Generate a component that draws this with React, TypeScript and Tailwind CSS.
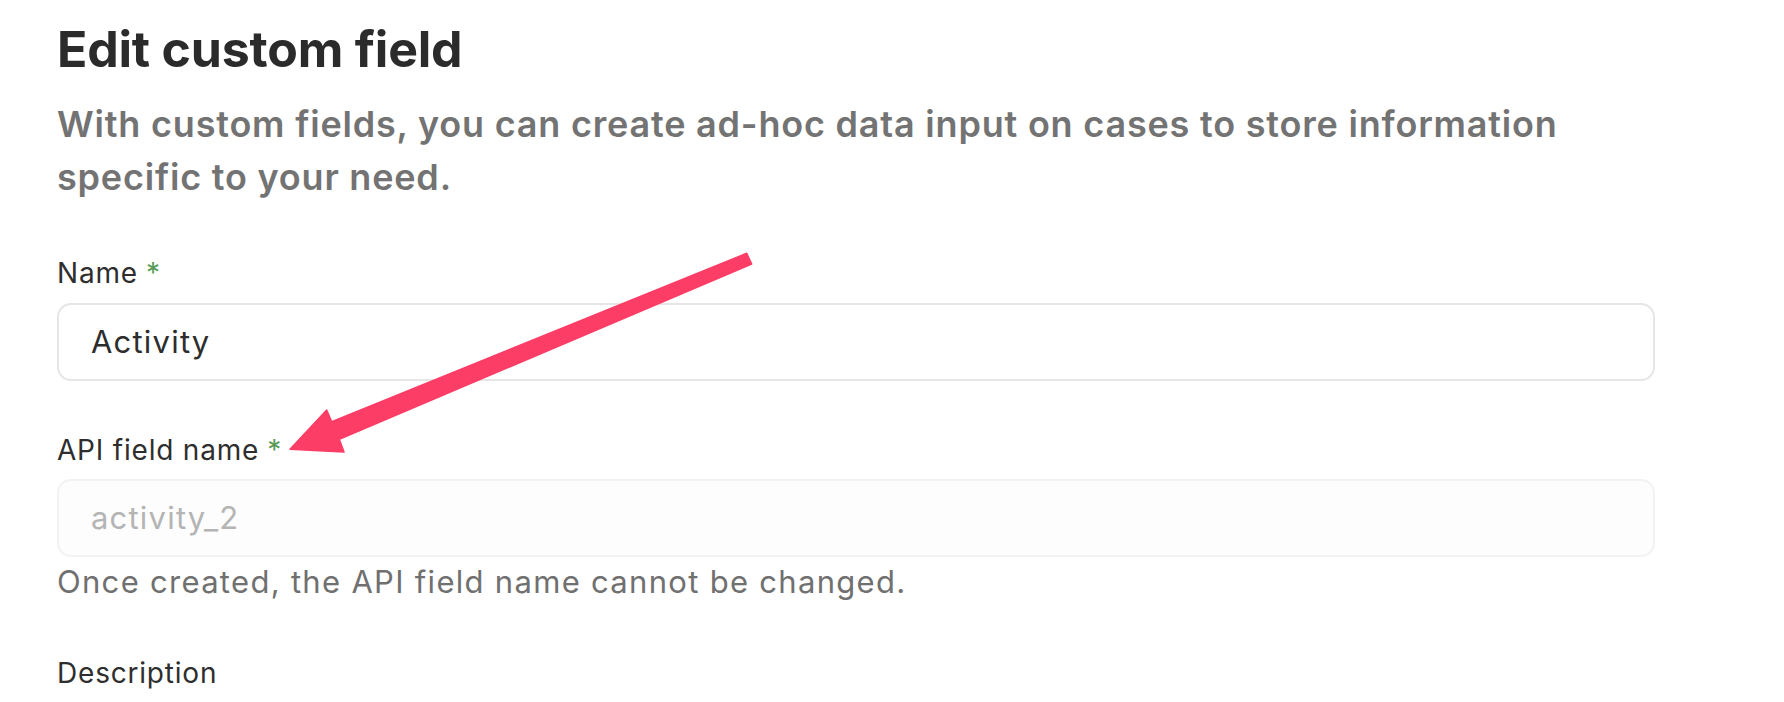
import React from "react";

function Arrow() {
  return (
    <svg
      className="absolute left-0 top-0 pointer-events-none"
      width="1784"
      height="702"
      viewBox="0 0 1784 702"
    >
      <polygon
        points="746.7,253.3 751.7,264 339.3,439.3 344,452 290,449.3 326.7,410 331.7,421.7"
        fill="#fc3d66"
        stroke="#fc3d66"
        strokeWidth="1.5"
        strokeLinejoin="round"
      />
    </svg>
  );
}

function Label({ text, required }: { text: string; required?: boolean }) {
  return (
    <label className="block text-[28px] leading-[32px] text-[#2e2e2e] tracking-[0.8px]">
      {text}
      {required && <span className="ml-[8px] text-[#5a9a57]">*</span>}
    </label>
  );
}

export default function App() {
  return (
    <div className="relative w-[1784px] h-[702px] overflow-hidden bg-white font-['Inter',sans-serif]">
      <div className="pl-[57px] pt-[24px] w-[1655px]">
        <h1 className="text-[50px] leading-[50px] font-bold text-[#2b2b2b] tracking-[-0.2px]">
          Edit custom field
        </h1>
        <p className="mt-[24px] text-[36px] leading-[53px] font-semibold text-[#737373] tracking-[0.8px]">
          With custom fields, you can create ad-hoc data input on cases to store information specific to your need.
        </p>

        <div className="mt-[53px]">
          <Label text="Name" required />
          <div className="mt-[14px] h-[78px] rounded-[14px] border-2 border-[#e6e6e6] bg-white flex items-center px-[32px]">
            <span className="text-[31px] tracking-[1.2px] text-[#2d2d2d]">Activity</span>
          </div>
        </div>

        <div className="mt-[53px]">
          <Label text="API field name" required />
          <div className="mt-[13px] h-[78px] rounded-[14px] border-2 border-[#f2f2f2] bg-[#fdfdfd] flex items-center px-[32px]">
            <span className="text-[31px] tracking-[1.2px] text-[#b4b4b4]">activity_2</span>
          </div>
          <p className="mt-[7px] text-[31px] leading-[36px] tracking-[1.3px] text-[#707070]">
            Once created, the API field name cannot be changed.
          </p>
        </div>

        <div className="mt-[57px]">
          <Label text="Description" />
        </div>
      </div>
      <Arrow />
    </div>
  );
}
